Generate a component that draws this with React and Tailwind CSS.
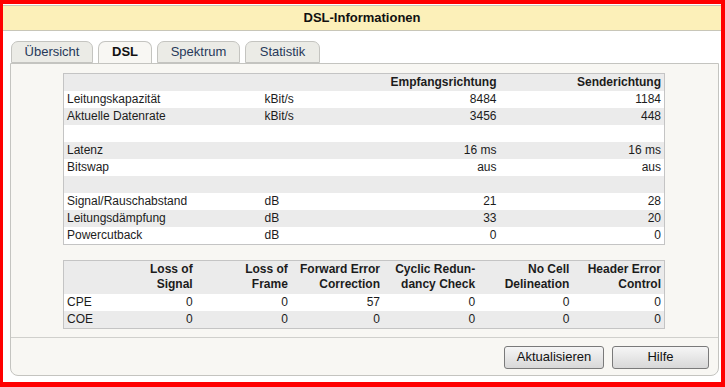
const topRows = [
  { label: 'Leitungskapazität', unit: 'kBit/s', rx: '8484', tx: '1184' },
  { label: 'Aktuelle Datenrate', unit: 'kBit/s', rx: '3456', tx: '448' },
  { label: '', unit: '', rx: '', tx: '' },
  { label: 'Latenz', unit: '', rx: '16 ms', tx: '16 ms' },
  { label: 'Bitswap', unit: '', rx: 'aus', tx: 'aus' },
  { label: '', unit: '', rx: '', tx: '' },
  { label: 'Signal/Rauschabstand', unit: 'dB', rx: '21', tx: '28' },
  { label: 'Leitungsdämpfung', unit: 'dB', rx: '33', tx: '20' },
  { label: 'Powercutback', unit: 'dB', rx: '0', tx: '0' },
]

const errHeads = [
  ['Loss of', 'Signal'],
  ['Loss of', 'Frame'],
  ['Forward Error', 'Correction'],
  ['Cyclic Redun-', 'dancy Check'],
  ['No Cell', 'Delineation'],
  ['Header Error', 'Control'],
]

const errRows = [
  { name: 'CPE', vals: ['0', '0', '57', '0', '0', '0'] },
  { name: 'COE', vals: ['0', '0', '0', '0', '0', '0'] },
]

const errWidths = ['w-[95px]', 'w-[95px]', 'w-[92px]', 'w-[95px]', 'w-[94px]', 'w-[92px]']

function Tab({ label, active }) {
  return (
    <div
      className={`h-[22px] px-[13px] flex items-center justify-center rounded-t-[7px] border border-[#c4c4c0] text-[13px] ${
        active
          ? 'bg-[#f8f7f3] border-b-[#f8f7f3] font-bold text-[#111] -mb-px h-[23px] pb-px'
          : 'bg-[#ebebe6] text-[#27395a]'
      }`}
    >
      {label}
    </div>
  )
}

export default function App() {
  return (
    <div className="w-[725px] h-[387px] bg-white border-[#ff0000] border-l-[3px] border-t-[4px] border-r-[4px] border-b-[5px] flex flex-col font-['Liberation_Sans',Arial,sans-serif] text-[#1c1c1c] overflow-hidden">
      <div className="mt-px h-[26px] bg-[#fcf0b9] border-y border-[#c8c6b8] flex items-center justify-center text-[13px] font-bold text-[#111]">
        DSL-Informationen
      </div>

      <div className="flex items-end gap-[5px] pl-[8px] pt-[10px]">
        <div className="w-[82px]"><Tab label="Übersicht" /></div>
        <div className="w-[54px]"><Tab label="DSL" active /></div>
        <div className="w-[83px]"><Tab label="Spektrum" /></div>
        <div className="w-[75px]"><Tab label="Statistik" /></div>
      </div>

      <div className="ml-[7px] mr-[2px] flex-1 mb-[6px] bg-[#f8f7f3] border border-[#c4c4c0] rounded-b-[8px] flex flex-col">
        <div className="pl-[52px] pt-[9px]">
          <table className="w-[602px] table-fixed border-collapse border border-[#c4c4c4] text-[12px] leading-[17px]">
            <colgroup>
              <col className="w-[198px]" />
              <col className="w-[116px]" />
              <col className="w-[122px]" />
              <col />
            </colgroup>
            <tbody>
              <tr className="bg-[#ebebeb] h-[17px] font-bold">
                <td />
                <td />
                <td className="text-right pr-[3px]">Empfangsrichtung</td>
                <td className="text-right pr-[3px]">Senderichtung</td>
              </tr>
              {topRows.map((r, i) => (
                <tr key={i} className={`h-[17px] ${i % 2 === 0 ? 'bg-white' : 'bg-[#ebebeb]'}`}>
                  <td className="pl-[3px]">{r.label}</td>
                  <td className="pl-[3px]">{r.unit}</td>
                  <td className="text-right pr-[3px]">{r.rx}</td>
                  <td className="text-right pr-[3px]">{r.tx}</td>
                </tr>
              ))}
            </tbody>
          </table>
        </div>

        <div className="pl-[52px] pt-[15px]">
          <table className="w-[602px] table-fixed border-collapse border border-[#c4c4c4] text-[12px] leading-[17px]">
            <colgroup>
              <col className="w-[37px]" />
              {errWidths.map((w, i) => (
                <col key={i} className={w} />
              ))}
            </colgroup>
            <tbody>
              <tr className="bg-[#ebebeb] h-[33px] font-bold leading-[15px]">
                <td />
                {errHeads.map((h, i) => (
                  <td key={i} className="text-right pr-[3px] align-middle">
                    {h[0]}
                    <br />
                    {h[1]}
                  </td>
                ))}
              </tr>
              {errRows.map((r, i) => (
                <tr key={r.name} className={`h-[17px] ${i % 2 === 0 ? 'bg-white' : 'bg-[#ebebeb]'}`}>
                  <td className="pl-[3px]">{r.name}</td>
                  {r.vals.map((v, j) => (
                    <td key={j} className="text-right pr-[3px]">{v}</td>
                  ))}
                </tr>
              ))}
            </tbody>
          </table>
        </div>

        <div className="mt-[8px] border-t border-[#d0d0cc]" />

        <div className="flex justify-end gap-[8px] pr-[9px] pt-[8px]">
          <button className="w-[100px] h-[23px] rounded-[3px] border border-[#7a7a7a] bg-gradient-to-b from-[#f6f6f6] to-[#d8d8d8] text-[13px] text-[#111]">
            Aktualisieren
          </button>
          <button className="w-[97px] h-[23px] rounded-[3px] border border-[#7a7a7a] bg-gradient-to-b from-[#f6f6f6] to-[#d8d8d8] text-[13px] text-[#111]">
            Hilfe
          </button>
        </div>
      </div>
    </div>
  )
}
